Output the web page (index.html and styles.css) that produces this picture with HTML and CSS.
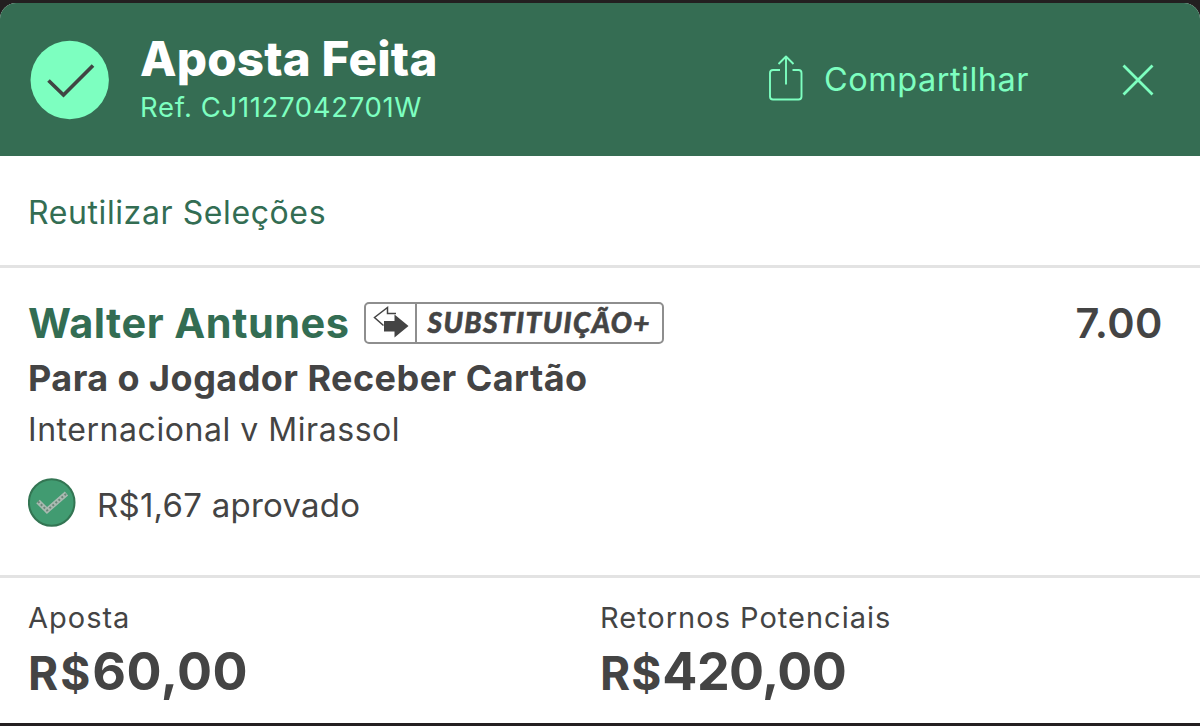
FILE: index.html
```html
<!DOCTYPE html>
<html lang="pt-BR">
<head>
<meta charset="utf-8">
<title>Aposta Feita</title>
<link rel="stylesheet" href="styles.css">
</head>
<body>
<main class="receipt">
  <header class="header">
    <svg class="header-check" viewBox="0 0 80 80"><circle cx="39.700" cy="40" r="39.2" fill="#7dffc0"/><path d="M18.500 40.500 33.500 55 63 25.500" fill="none" stroke="#404543" stroke-width="3.700"/></svg>
    <div class="heading">
      <h1 class="title">Aposta Feita</h1>
      <p class="ref">Ref. CJ1127042701W</p>
    </div>
    <button class="share">
      <svg class="share-icon" viewBox="0 0 36 48" fill="none" stroke="#7dffc0" stroke-width="1.900" stroke-linejoin="round"><path d="M12 16H5Q2 16 2 19V42.500Q2 45.500 5 45.500H30.500Q33.500 45.500 33.500 42.500V19Q33.500 16 30.500 16H24.500M18 30.500V3M10.500 10 18 2.500 25.500 10"/></svg>
      <span class="share-label">Compartilhar</span>
    </button>
    <button class="close"><svg class="close-icon" viewBox="0 0 34 34"><path d="M2.500 2.500 31.500 31.500M31.500 2.500 2.500 31.500" stroke="#7dffc0" stroke-width="2.800"/></svg></button>
  </header>
  <section class="reuse"><a class="reuse-link">Reutilizar Seleções</a></section>
  <section class="selection">
    <div class="pick">
      <h2 class="player">Walter Antunes</h2>
      <div class="badge">
        <svg class="badge-icon" viewBox="0 0 49 38"><path d="M17.500 21.500 8.500 13.500 21.500 3.500V9.500H30" fill="none" stroke="#444" stroke-width="1.500"/><path d="M18 17H28.500V10.500L42.500 22 28.500 33.500V27.500H18Z" fill="#444"/></svg>
        <span class="badge-label">SUBSTITUIÇÃO+</span>
      </div>
      <span class="odds">7.00</span>
    </div>
    <p class="market">Para o Jogador Receber Cartão</p>
    <p class="fixture">Internacional v Mirassol</p>
    <div class="approved">
      <svg class="approved-icon" viewBox="0 0 48 50"><ellipse cx="23.700" cy="24.500" rx="22.800" ry="23.300" fill="#419b71" stroke="#337553" stroke-width="2"/><path d="M10 23.500 19 32.500 38.500 15.500" fill="none" stroke="#a9bab1" stroke-width="5"/><path d="M10 23.500 19 32.500 38.500 15.500" fill="none" stroke="#6c8579" stroke-width="2" stroke-dasharray="2 2"/></svg>
      <span class="approved-text">R$1,67 aprovado</span>
    </div>
  </section>
  <footer class="totals">
    <div class="total"><p class="label">Aposta</p><p class="amount amount-stake"><span class="currency">R$</span>60,00</p></div>
    <div class="total"><p class="label">Retornos Potenciais</p><p class="amount amount-return"><span class="currency">R$</span>420,00</p></div>
  </footer>
</main>
</body>
</html>
```
FILE: styles.css
```css
* { box-sizing: border-box; margin: 0; padding: 0; }
body { background: #231f20; font-family: Inter, "Liberation Sans", sans-serif; color: #444; padding-top: 3px; overflow: hidden; }
button { background: none; border: 0; font: inherit; color: inherit; }
svg { display: block; flex: none; }
p, h1, h2, span, a { white-space: nowrap; }
.receipt { height: 720px; background: #fff; border-radius: 16px 16px 0 0; overflow: hidden; }
.header { height: 153px; background: #356d53; color: #7dffc0; display: flex; padding: 0 45px 0 30px; align-items: center; }
.header-check { width: 80px; height: 80px; }
.heading { margin-left: 30px; margin-top: 0; }
.title { color: #fff; font-size: 47.5px; font-weight: 800; line-height: 55px; letter-spacing: .2px; }
.ref { font-size: 27.500px; line-height: 42px; letter-spacing: .65px; }
.share { display: flex; align-items: center; margin-left: auto; }
.share-icon { width: 36px; height: 48px; margin-top: -4px; }
.share-label { font-size: 32.5px; line-height: 40px; margin-left: 20px; letter-spacing: .5px; }
.close { margin-left: 92px; }
.close-icon { width: 34px; height: 34px; }
.reuse { height: 112px; border-bottom: 3px solid #e3e3e3; display: flex; align-items: center; padding: 4px 28px 0; }
.reuse-link { color: #336d53; font-size: 32px; letter-spacing: .6px; line-height: 40px; }
.selection { height: 310px; padding: 28px 39px 0 28px; border-bottom: 3px solid #e3e3e3; }
.pick { display: flex; align-items: center; height: 54px; }
.player { color: #336d53; font-size: 41.5px; font-weight: 700; line-height: 54px; letter-spacing: .5px; }
.badge { display: flex; align-items: center; width: 300px; height: 42px; margin-left: 14px; border: 2px solid #8e8e8e; border-radius: 5px; }
.badge-icon { width: 49px; height: 38px; }
.badge-label { flex: 1; height: 38px; border-left: 2px solid #8e8e8e; padding-left: 11px; font: italic 900 28px/36px Lato, sans-serif; letter-spacing: 1.4px; -webkit-text-stroke: .6px #444; }
.odds { margin-left: auto; font-size: 41.5px; font-weight: 600; line-height: 56px; letter-spacing: .5px; margin-right: -2px; }
.market { font-size: 36px; font-weight: 700; line-height: 56px; letter-spacing: .45px; }
.fixture { font-size: 32px; line-height: 47px; letter-spacing: .55px; }
.approved { display: flex; align-items: center; height: 50px; margin-top: 25px; }
.approved-icon { width: 48px; height: 50px; }
.approved-text { font-size: 33px; line-height: 40px; padding-top: 4px; margin-left: 21px; letter-spacing: .25px; }
.totals { display: grid; grid-template-columns: 572px 1fr; padding: 20px 28px 0; }
.label { font-size: 29px; line-height: 40px; letter-spacing: 1px; }
.amount { font-size: 52px; font-weight: 700; line-height: 68px; }
.amount-stake { letter-spacing: .5px; }
.amount-stake .currency { letter-spacing: 2px; }
.amount-return { letter-spacing: -.6px; }
.currency { font-size: 46px; line-height: 1; letter-spacing: 1px; }
```
